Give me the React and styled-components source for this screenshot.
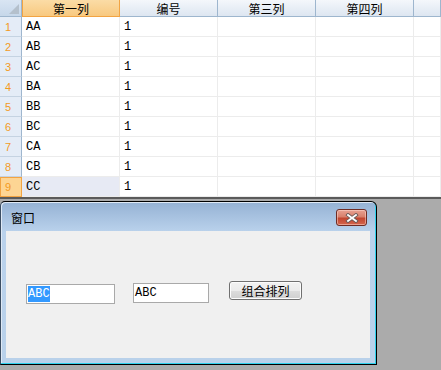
import React from "react";
import styled, { createGlobalStyle } from "styled-components";

const Global = createGlobalStyle`
  html, body { margin: 0; padding: 0; background: #ababab; }
  body { font-family: "Liberation Mono", "Noto Sans CJK SC", monospace; }
`;

const Screen = styled.div`
  width: 441px;
  height: 370px;
  overflow: hidden;
  background: #ababab;
  display: flex;
  flex-direction: column;
`;

const Sheet = styled.div`
  display: grid;
  grid-template-columns: 22px 98px 98px 98px 98px 27px;
  grid-template-rows: 17px repeat(9, 20px);
  background: #fff;
  border-bottom: 2px solid #5a5a5a;
`;

const Corner = styled.div`
  position: relative;
  background: linear-gradient(#d9e5f3, #c6d7ea);
  border-right: 1px solid #9eb6ce;
  border-bottom: 1px solid #9eb6ce;
  &::after {
    content: "";
    position: absolute;
    right: 2px;
    bottom: 2px;
    width: 0;
    height: 0;
    border-left: 10px solid transparent;
    border-bottom: 10px solid #b4c0cc;
  }
`;

const ColHead = styled.div`
  box-sizing: border-box;
  display: flex;
  align-items: center;
  justify-content: center;
  font-family: "Noto Sans CJK SC", sans-serif;
  font-size: 12px;
  color: #000;
  background: ${(p) =>
    p.$active
      ? "linear-gradient(#fbdca6, #f8c980)"
      : "linear-gradient(#f4f7fb, #dde6f1)"};
  border-right: 1px solid ${(p) => (p.$active ? "#f2a443" : "#9eb6ce")};
  border-bottom: 1px solid ${(p) => (p.$active ? "#f2a443" : "#9eb6ce")};
  ${(p) => (p.$active ? "border-left: 1px solid #f2a443;" : "")}
`;

const RowHead = styled.div`
  box-sizing: border-box;
  display: flex;
  align-items: center;
  padding-left: 5px;
  font-family: "Liberation Sans", sans-serif;
  font-size: 11px;
  color: #f39a1e;
  background: ${(p) => (p.$active ? "#fdd594" : "#e4ecf7")};
  border-right: 1px solid ${(p) => (p.$active ? "#f2a443" : "#9eb6ce")};
  border-bottom: 1px solid ${(p) => (p.$active ? "#f2a443" : "#c5d3e2")};
  ${(p) => (p.$active ? "border-left: 1px solid #f2a443; border-top: 1px solid #f2a443; padding-left: 4px;" : "")}
`;

const Cell = styled.div`
  box-sizing: border-box;
  display: flex;
  align-items: center;
  padding-left: 4px;
  font-family: "Liberation Mono", "DejaVu Sans Mono", monospace;
  font-size: 12px;
  color: #000;
  background: ${(p) => (p.$selected ? "#e7eaf4" : "#fff")};
  border-right: 1px solid #ececec;
  border-bottom: 1px solid #ececec;
`;

const Window = styled.div`
  box-sizing: border-box;
  margin-top: 2px;
  width: 377px;
  height: 164px;
  background: linear-gradient(#95b2d4 0px, #bad2ec 30px, #b9d1ea 100%);
  border: 1px solid #000;
  border-left-color: #3c4e63;
  border-radius: 5px 6px 0 0;
  box-shadow: inset -1px -1px 0 #2ed1ec, inset 1px 1px 0 #dfe9f5;
  padding: 0 6px 6px 5px;
  display: flex;
  flex-direction: column;
`;

const TitleBar = styled.div`
  height: 29px;
  display: flex;
  align-items: center;
  justify-content: space-between;
  padding: 0 3px 0 5px;
`;

const Title = styled.span`
  font-family: "Noto Sans CJK SC", sans-serif;
  font-size: 12px;
  color: #000;
  margin-top: 1px;
`;

const CloseBtn = styled.div`
  box-sizing: border-box;
  width: 31px;
  height: 17px;
  margin-top: 2px;
  border: 1px solid #6f2c24;
  border-radius: 3px;
  background: linear-gradient(#e8a192 0%, #d8806c 45%, #c24630 55%, #d4664e 100%);
  box-shadow: inset 0 0 0 1px rgba(255, 220, 210, 0.5);
  display: flex;
  align-items: center;
  justify-content: center;
`;

const Client = styled.div`
  flex: 1;
  background: #f0f0f0;
  display: flex;
  align-items: flex-start;
  padding: 50px 0 0 20px;
`;

const TextBox = styled.div`
  box-sizing: border-box;
  width: ${(p) => p.$w}px;
  height: 20px;
  margin-top: ${(p) => p.$top}px;
  margin-right: ${(p) => p.$gap}px;
  background: #fff;
  border: 1px solid #a9a9a9;
  display: flex;
  align-items: center;
  padding-left: 1px;
  font-family: "Liberation Mono", "DejaVu Sans Mono", monospace;
  font-size: 12px;
  color: #000;
`;

const Sel = styled.span`
  background: #3399ff;
  color: #fff;
  padding: 1px 0;
`;

const PushButton = styled.div`
  box-sizing: border-box;
  width: 73px;
  height: 19px;
  border: 1px solid #707070;
  border-radius: 3px;
  background: linear-gradient(#f2f2f2 0%, #ebebeb 50%, #dddddd 51%, #cfcfcf 100%);
  box-shadow: inset 0 0 0 1px #fcfcfc;
  display: flex;
  align-items: center;
  justify-content: center;
  font-family: "Noto Sans CJK SC", sans-serif;
  font-size: 12px;
  color: #000;
`;

const heads = ["第一列", "编号", "第三列", "第四列", ""];
const rows = ["AA", "AB", "AC", "BA", "BB", "BC", "CA", "CB", "CC"];

export default function App() {
  return (
    <>
      <Global />
      <Screen>
        <Sheet>
          <Corner />
          {heads.map((h, i) => (
            <ColHead key={i} $active={i === 0}>
              {h}
            </ColHead>
          ))}
          {rows.map((r, i) => (
            <React.Fragment key={r}>
              <RowHead $active={i === 8}>{i + 1}</RowHead>
              <Cell $selected={i === 8}>{r}</Cell>
              <Cell>1</Cell>
              <Cell />
              <Cell />
              <Cell />
            </React.Fragment>
          ))}
        </Sheet>
        <Window>
          <TitleBar>
            <Title>窗口</Title>
            <CloseBtn>
              <svg width="14" height="10" viewBox="0 0 14 10">
                <path d="M3 2 L11 8 M11 2 L3 8" stroke="#6b5a58" strokeWidth="3.6" strokeLinecap="square" />
                <path d="M3 2 L11 8 M11 2 L3 8" stroke="#ffffff" strokeWidth="1.8" strokeLinecap="square" />
              </svg>
            </CloseBtn>
          </TitleBar>
          <Client>
            <TextBox $w={89} $top={3} $gap={18}>
              <Sel>ABC</Sel>
            </TextBox>
            <TextBox $w={76} $top={2} $gap={20}>
              ABC
            </TextBox>
            <PushButton>组合排列</PushButton>
          </Client>
        </Window>
      </Screen>
    </>
  );
}
